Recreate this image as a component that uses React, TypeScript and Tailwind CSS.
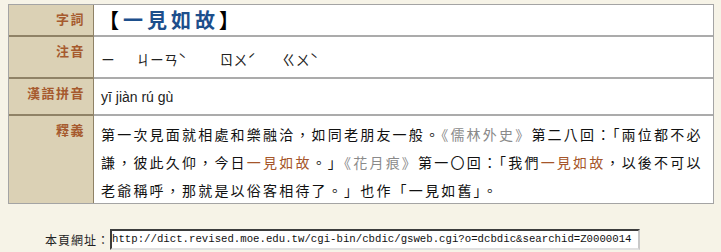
const cjk = "font-['Noto_Sans_CJK_TC','Noto_Sans_CJK_SC',sans-serif]";

function Label({ text }: { text: string }) {
    return (
        <div className={`bg-[#dbd1b5] border-r border-[#8f8266] text-right pr-[8px] pt-[5px] text-[13px] leading-[18px] tracking-[1.5px] text-[#a65a2e] font-bold ${cjk}`}>
            {text}
        </div>
    );
}

function App() {
    const hl = "text-[#a5552a]";
    const book = "text-[#8a8a8a]";

    return (
        <div className="w-[721px] h-[252px] bg-[#f6f3e7] pt-[4px] pl-[8px] overflow-hidden">
            <div className="w-[706px] border border-[#a4a4a4] grid grid-cols-[85px_1fr] bg-white">
                {/* 字詞 */}
                <Label text="字詞" />
                <div className={`h-[30px] flex items-center pl-[5px] text-[20px] font-bold tracking-[4px] ${cjk}`}>
                    <span className="text-black">【</span>
                    <span className="text-[#1d4f8c]">一見如故</span>
                    <span className="text-black">】</span>
                </div>

                {/* 注音 */}
                <div className="col-span-2 h-[2px] bg-[#ababab] grid grid-cols-[85px_1fr]"><div className="bg-[#8f8266]" /></div>
                <Label text="注音" />
                <div className={`h-[40px] flex items-center pl-[7px] pt-[4px] text-[14px] text-[#222] ${cjk}`}>
                    <span>ㄧ</span>
                    <span className="ml-[21px]">ㄐㄧㄢˋ</span>
                    <span className="ml-[33px]">ㄖㄨˊ</span>
                    <span className="ml-[26px]">ㄍㄨˋ</span>
                </div>

                {/* 漢語拼音 */}
                <div className="col-span-2 h-[2px] bg-[#ababab] grid grid-cols-[85px_1fr]"><div className="bg-[#8f8266]" /></div>
                <Label text="漢語拼音" />
                <div className="h-[35px] flex items-center pl-[7px] pt-[1px] text-[14px] text-[#222] font-['Liberation_Sans',sans-serif]">
                    yī jiàn rú gù
                </div>

                {/* 釋義 */}
                <div className="col-span-2 h-[2px] bg-[#ababab] grid grid-cols-[85px_1fr]"><div className="bg-[#8f8266]" /></div>
                <Label text="釋義" />
                <div className={`h-[87px] pl-[7px] pt-[4px] text-[14px] leading-[28px] tracking-[2.2px] text-[#111] whitespace-nowrap ${cjk}`}>
                    第一次見面就相處和樂融洽，如同老朋友一般。<span className={book}>《儒林外史》</span>第二八回：「兩位都不必
                    <br />
                    謙，彼此久仰，今日<span className={hl}>一見如故</span>。」<span className={book}>《花月痕》</span>第一〇回：「我們<span className={hl}>一見如故</span>，以後不可以
                    <br />
                    老爺稱呼，那就是以俗客相待了。」也作「一見如舊」。
                </div>
            </div>

            <div className="flex items-center mt-[25px] pl-[37px]">
                <span className={`text-[12px] text-[#222] tracking-[1px] ${cjk}`}>本頁網址：</span>
                <div className="w-[530px] h-[21px] border-2 border-t-[#3c3c3c] border-l-[#3c3c3c] border-r-[#c8c8c8] border-b-[#e0e0e0] bg-white flex items-center text-[10.7px] text-[#111] font-['Liberation_Mono',monospace] whitespace-nowrap overflow-hidden">
                    http://dict.revised.moe.edu.tw/cgi-bin/cbdic/gsweb.cgi?o=dcbdic&amp;searchid=Z0000014
                </div>
            </div>
        </div>
    );
}

export default App
